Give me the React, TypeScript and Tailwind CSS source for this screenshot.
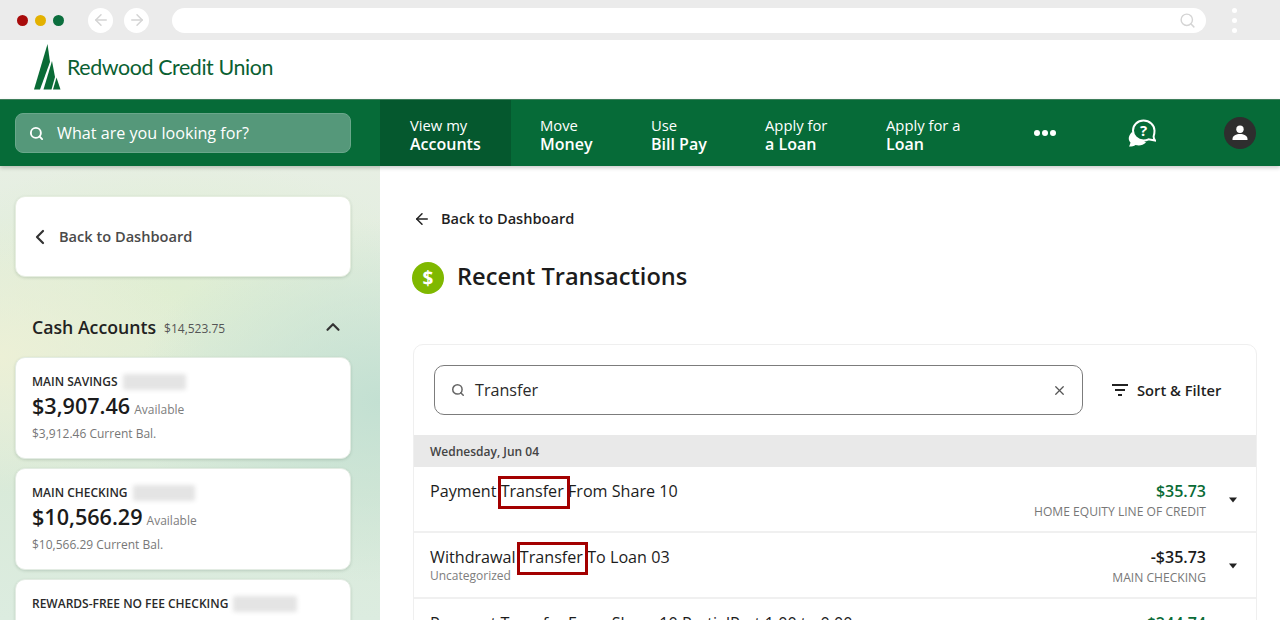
import React from "react";
import { ArrowLeft, ArrowRight, ChevronLeft, ChevronUp, Search, X } from "lucide-react";

function Highlight({ children, w }: { children: React.ReactNode; w: string }) {
  return (
    <span className="relative">
      {children}
      <span className={`absolute -left-[3px] top-[-4px] h-[33px] border-[3px] border-[#a30000] ${w}`} />
    </span>
  );
}

function NavItem({ a, b, active, className }: { a: string; b: string; active?: boolean; className: string }) {
  return (
    <div className={`flex h-full flex-col justify-center pt-[4px] text-[14.8px] leading-[19px] text-white ${active ? "bg-[#05582e]" : ""} ${className}`}>
      <span>{a}</span>
      <span className="text-[16px] font-semibold">{b}</span>
    </div>
  );
}

function Account({ name, blur, amount, current }: { name: string; blur: string; amount: string; current: string }) {
  return (
    <div className="h-[102px] shrink-0 rounded-[10px] border border-[#e3ece3] bg-white px-4 pt-[14px] shadow-[0_1px_3px_rgba(60,90,70,0.2)]">
      <div className="flex h-[19px] items-center text-[12px] font-semibold text-[#2a2a2a]">
        <span>{name}</span>
        <span className={`ml-[5px] h-[16px] rounded-[2px] bg-[#e4e4e4] blur-[2px] ${blur}`} />
      </div>
      <div className="flex items-baseline">
        <span className="text-[21.6px] font-semibold leading-[30px] text-[#1b1b1b]">{amount}</span>
        <span className="ml-[4px] text-[12px] text-[#7d7d7d]">Available</span>
      </div>
      <div className="mt-[4px] text-[12px] leading-[18px] text-[#777]">{current} Current Bal.</div>
    </div>
  );
}

function Row({ left, sub, amount, green, account }: { left: React.ReactNode; sub?: string; amount: string; green?: boolean; account: string }) {
  return (
    <div className="flex h-[66px] shrink-0 border-b-[2px] border-[#f0f0f0] pl-4 pr-[18px]">
      <div className="flex-1 pt-[13px]">
        <div className="text-[16.15px] leading-[22px] text-[#1c1c1c]">{left}</div>
        {sub && <div className="mt-[1px] text-[12px] leading-[13px] text-[#7d7d7d]">{sub}</div>}
      </div>
      <div className="pt-[13px] text-right">
        <div className={`text-[16px] font-semibold leading-[22px] ${green ? "text-[#0a6b36]" : "text-[#1c1c1c]"}`}>{amount}</div>
        <div className="mt-[1px] text-[12.1px] leading-[17px] text-[#777]">{account}</div>
      </div>
      <div className="ml-[22px] flex items-center pt-[2px]">
        <svg width="10" height="6" viewBox="0 0 10 6"><path d="M1 0.5h8L5 5.5z" fill="#222" /></svg>
      </div>
    </div>
  );
}

export default function App() {
  return (
    <div className="flex h-[620px] w-[1280px] flex-col overflow-hidden bg-white font-['Open_Sans',sans-serif]">
      {/* browser chrome */}
      <div className="flex h-[40px] shrink-0 items-center bg-[#ebebeb] pl-[17px] pr-[43px]">
        <span className="h-[11px] w-[11px] rounded-full bg-[#a80b0b]" />
        <span className="ml-[7px] h-[11px] w-[11px] rounded-full bg-[#e3b100]" />
        <span className="ml-[7px] h-[11px] w-[11px] rounded-full bg-[#0b6e3d]" />
        <span className="ml-[24px] flex h-[25px] w-[25px] items-center justify-center rounded-full bg-white text-[#d4d4d4]"><ArrowLeft size={18} /></span>
        <span className="ml-[11px] flex h-[25px] w-[25px] items-center justify-center rounded-full bg-white text-[#d4d4d4]"><ArrowRight size={18} /></span>
        <div className="ml-[23px] flex h-[25px] flex-1 items-center justify-end rounded-full bg-white pr-[10px] text-[#d4d4d4]"><Search size={17} /></div>
        <div className="ml-[26px] flex flex-col gap-[5px]">
          <span className="h-[5px] w-[5px] rounded-full bg-white" />
          <span className="h-[5px] w-[5px] rounded-full bg-white" />
          <span className="h-[5px] w-[5px] rounded-full bg-white" />
        </div>
      </div>

      {/* logo bar */}
      <div className="flex h-[59px] shrink-0 items-start pl-[34px] pt-[4px]">
        <svg width="27" height="46" viewBox="0 0 27 46">
          <path d="M13.5 0 L16 18 L6 45.5 H0 Z" fill="#0a6b36" />
          <path d="M18 17 L21 33 L17.500 45.500 H9.500 Z" fill="#0a6b36" />
          <path d="M22.500 33.500 L26.500 45.500 H19 Z" fill="#0a6b36" />
        </svg>
        <span className="ml-[6px] mt-[10px] font-['Lato',sans-serif] text-[21.4px] leading-[27px] tracking-[-0.4px] text-[#0a6032]">Redwood Credit Union</span>
      </div>

      {/* nav */}
      <div className="relative z-10 flex h-[67px] shrink-0 items-center border-t border-[#3f7f5c] bg-[#066b38] shadow-[0_2px_4px_rgba(0,0,0,0.2)]">
        <div className="flex h-full w-[380px] shrink-0 items-center pb-[1px] pl-[15px] pr-[29px]">
          <div className="flex h-[40px] w-full items-center rounded-[8px] border border-[#6aa78b] bg-[#55987a] pl-[13px] pt-[1px] text-[16.15px] text-white">
            <Search size={15} strokeWidth={3} />
            <span className="ml-[13px]">What are you looking for?</span>
          </div>
        </div>
        <NavItem a="View my" b="Accounts" active className="w-[131px] pl-[30px]" />
        <NavItem a="Move" b="Money" className="w-[111px] pl-[29px]" />
        <NavItem a="Use" b="Bill Pay" className="w-[114px] pl-[29px]" />
        <NavItem a="Apply for" b="a Loan" className="w-[120px] pl-[29px]" />
        <NavItem a="Apply for a" b="Loan" className="w-[130px] pl-[30px]" />
        <div className="flex w-[118px] justify-center gap-[2px]">
          <span className="h-[6px] w-[6px] rounded-full bg-white" />
          <span className="h-[6px] w-[6px] rounded-full bg-white" />
          <span className="h-[6px] w-[6px] rounded-full bg-white" />
        </div>
        <div className="ml-[23px] flex w-[30px] justify-center">
          <svg width="28" height="28" viewBox="0 0 28 28" fill="none">
            <path d="M4 13C0 17 0 21 2.500 23.500C2.200 25 1.500 26.500 1 27.500C4 27.500 6 27 7.500 26C11 27 15 26.500 18 23.500Z" fill="#fff" />
            <path d="M15.500 1.500C9.500 1.500 5 6 5 11.500S9.500 21.500 15.500 21.500c2 0 3.500-.4 5-1.200L27 21.500c-1.300-1.600-1.500-3-1.300-4.500.6-1.500.8-3.500.8-5.500C26.500 6 21.500 1.500 15.500 1.500z" stroke="#fff" strokeWidth="2" fill="#066b38" />
            <text x="15.500" y="17" textAnchor="middle" fontSize="15" fontWeight="700" fill="#fff" fontFamily="'Open Sans',sans-serif">?</text>
          </svg>
        </div>
        <div className="ml-[67px] flex h-[32px] w-[32px] items-center justify-center rounded-full bg-[#2e2e2e]">
          <svg width="18" height="18" viewBox="0 0 18 18" fill="#fff">
            <circle cx="9" cy="5.200" r="3.700" />
            <path d="M1.500 15c0-3.300 3.800-5 7.500-5s7.500 1.700 7.500 5v1h-15z" />
          </svg>
        </div>
      </div>

      <div className="flex min-h-0 flex-1">
        {/* sidebar */}
        <aside className="flex w-[380px] shrink-0 flex-col bg-[radial-gradient(ellipse_65%_40%_at_100%_52%,#c3e0d2_0%,rgba(195,224,210,0)_100%),radial-gradient(ellipse_55%_30%_at_0%_42%,#ecf0d6_0%,rgba(236,240,214,0)_100%),radial-gradient(ellipse_70%_30%_at_45%_28%,#dfeed2_0%,rgba(223,238,210,0)_100%),linear-gradient(180deg,#e7efe3_0%,#d9ead9_70%,#dcece0_100%)] pl-[15px] pr-[29px] pt-[30px]">
          <div className="flex h-[81px] shrink-0 items-center rounded-[10px] border border-[#e6eee0] bg-white pl-[15px] text-[14.6px] font-semibold text-[#4a4a4a] shadow-[0_1px_3px_rgba(60,90,70,0.2)]">
            <ChevronLeft size={24} strokeWidth={2.2} className="-ml-[3px] text-[#333]" />
            <span className="ml-[7px]">Back to Dashboard</span>
          </div>
          <div className="mt-[38px] flex h-[24px] shrink-0 items-center pl-[17px] pr-[7px]">
            <span className="text-[17.7px] font-semibold text-[#222]">Cash Accounts</span>
            <span className="ml-[8px] mt-[3px] text-[12px] font-medium text-[#555]">$14,523.75</span>
            <ChevronUp size={22} strokeWidth={2.4} className="ml-auto text-[#333]" />
          </div>
          <div className="mt-[18px] flex flex-col gap-[9px]">
            <Account name="MAIN SAVINGS" blur="w-[63px]" amount="$3,907.46" current="$3,912.46" />
            <Account name="MAIN CHECKING" blur="w-[62px]" amount="$10,566.29" current="$10,566.29" />
            <Account name="REWARDS-FREE NO FEE CHECKING" blur="w-[64px]" amount="$1,204.00" current="$1,204.00" />
          </div>
        </aside>

        {/* main */}
        <main className="flex-1 pl-[33px] pr-[23px] pt-[42px]">
          <div className="flex h-[21px] items-center text-[14.6px] font-semibold text-[#1f1f1f]">
            <ArrowLeft size={18} strokeWidth={2} className="text-[#222]" />
            <span className="ml-[10px]">Back to Dashboard</span>
          </div>
          <div className="mt-[32px] flex h-[34px] items-center">
            <span className="-ml-[1px] flex h-[32px] w-[32px] items-center justify-center rounded-full bg-[#7fb800] text-[19px] font-bold text-white">$</span>
            <h1 className="ml-[13px] -mt-[2px] text-[23.6px] font-semibold text-[#1c1c1c]">Recent Transactions</h1>
          </div>
          <div className="mt-[49px] overflow-hidden rounded-t-[10px] border border-[#efefef]">
            <div className="flex h-[90px] items-start pl-[20px] pt-[20px]">
              <div className="flex h-[50px] w-[649px] items-center rounded-[10px] border-[1.5px] border-[#7c7c7c] pl-[16px] pr-[15px] text-[16.15px] text-[#2a2a2a]">
                <Search size={14} strokeWidth={2.6} className="text-[#666]" />
                <span className="ml-[10px]">Transfer</span>
                <X size={15} className="ml-auto text-[#555]" />
              </div>
              <div className="ml-[29px] flex h-[50px] items-center text-[14.7px] font-semibold text-[#1f1f1f]">
                <svg width="16" height="12" viewBox="0 0 16 12" fill="#222">
                  <rect x="0" y="0" width="16" height="2" />
                  <rect x="3" y="5" width="10" height="2" />
                  <rect x="6" y="10" width="4" height="2" />
                </svg>
                <span className="ml-[9px]">Sort &amp; Filter</span>
              </div>
            </div>
            <div className="flex h-[32px] items-center bg-[#e9e9e9] pl-4 pt-[1px] text-[12px] font-semibold text-[#444]">Wednesday, Jun 04</div>
            <Row
              left={<>Payment <Highlight w="w-[72px]">Transfer</Highlight> From Share 10</>}
              amount="$35.73"
              green
              account="HOME EQUITY LINE OF CREDIT"
            />
            <Row
              left={<>Withdrawal <Highlight w="w-[71px]">Transfer</Highlight> To Loan 03</>}
              sub="Uncategorized"
              amount="-$35.73"
              account="MAIN CHECKING"
            />
            <Row left="Payment Transfer From Share 10 PartialPmt 1.00 to 0.00" amount="$244.74" green account="HOME EQUITY LINE OF CREDIT" />
          </div>
        </main>
      </div>
    </div>
  );
}
